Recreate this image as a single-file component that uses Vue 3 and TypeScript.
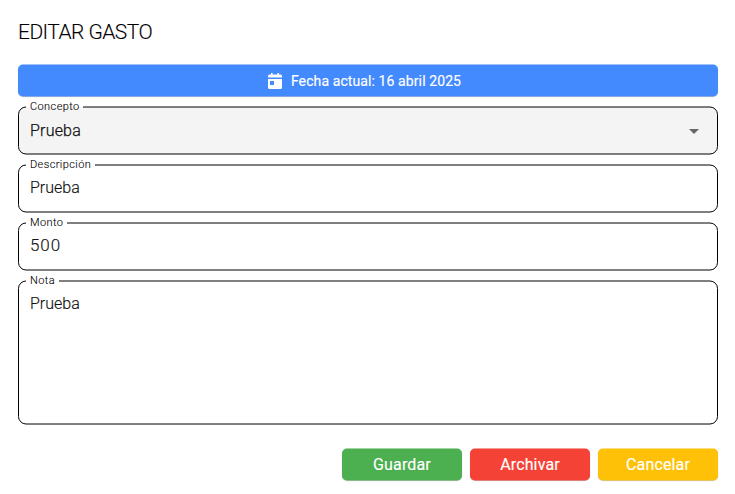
<script setup lang="ts">
import { ref } from 'vue'

interface Field {
  id: string
  label: string
  value: string
  kind: 'select' | 'input' | 'textarea'
  height: number
  gapEnd: number
}

interface Action {
  label: string
  tone: 'save' | 'archive' | 'cancel'
}

const date = ref('16 abril 2025')

const fields = ref<Field[]>([
  { id: 'concepto', label: 'Concepto', value: 'Prueba', kind: 'select', height: 48, gapEnd: 65 },
  { id: 'descripcion', label: 'Descripción', value: 'Prueba', kind: 'input', height: 48, gapEnd: 77 },
  { id: 'monto', label: 'Monto', value: '500', kind: 'input', height: 48, gapEnd: 49 },
  { id: 'nota', label: 'Nota', value: 'Prueba', kind: 'textarea', height: 144, gapEnd: 41 },
])

const actions: Action[] = [
  { label: 'Guardar', tone: 'save' },
  { label: 'Archivar', tone: 'archive' },
  { label: 'Cancelar', tone: 'cancel' },
]

// Rounded outline that leaves an opening in the top edge for the label.
function outlinePath(f: Field): string {
  const bottom = f.height
  return `M${f.gapEnd} 1H692a7.5 7.5 0 0 1 7.5 7.5V${bottom - 7.5}a7.5 7.5 0 0 1 -7.5 7.5H8a7.5 7.5 0 0 1 -7.5 -7.5V8.5A7.5 7.5 0 0 1 8 1`
}
</script>

<template>
  <main class="dialog">
    <h1 class="title">EDITAR GASTO</h1>
    <button class="btn date" type="button">
      <svg class="calendar" width="14" height="16" viewBox="0 0 14 16" aria-hidden="true">
        <path fill="currentColor" fill-rule="evenodd" d="M3 0h1.6v1.6h4.8V0H11v1.6h1.5A1.5 1.5 0 0 1 14 3.1V4.6H0V3.1A1.5 1.5 0 0 1 1.5 1.6H3zM0 6h14v8.5a1.5 1.5 0 0 1-1.5 1.5h-11A1.5 1.5 0 0 1 0 14.500zM2 8v4h4V8z" />
      </svg>
      <span>Fecha actual: {{ date }}</span>
    </button>

    <div class="fields">
      <div v-for="f in fields" :key="f.id" class="field" :class="[f.kind, f.id]">
        <svg class="outline" width="700" :height="f.height + 1" :viewBox="`0 0 700 ${f.height + 1}`" aria-hidden="true">
          <path :d="outlinePath(f)" />
        </svg>
        <span class="label">{{ f.label }}</span>
        <span class="value">{{ f.value }}</span>
        <svg v-if="f.kind === 'select'" class="arrow" width="10" height="5" viewBox="0 0 10 5" aria-hidden="true">
          <path d="M0 0h10L5 5z" fill="#666" />
        </svg>
      </div>
    </div>

    <div class="actions">
      <button v-for="a in actions" :key="a.tone" class="btn" :class="a.tone" type="button">
        <span>{{ a.label }}</span>
      </button>
    </div>
  </main>
</template>

<style>
body {
  background: #fff;
}
</style>

<style scoped>
.dialog {
  box-sizing: border-box;
  width: 735px;
  height: 494px;
  padding: 16px 17px 0 18px;
  font-family: Roboto, "Liberation Sans", sans-serif;
  color: #111;
}
.title {
  margin: 0 0 16px;
  height: 32px;
  line-height: 32px;
  font-size: 21px;
  font-weight: 300;
  letter-spacing: -0.55px;
  color: #000;
  -webkit-text-stroke: 0.1px #000;
}
.btn {
  position: relative;
  display: flex;
  align-items: center;
  justify-content: center;
  width: 120px;
  height: 32px;
  padding: 1px 0 0;
  border: 0;
  background: none;
  color: #fff;
  font: 400 16px/31px Roboto, "Liberation Sans", sans-serif;
  letter-spacing: 0.15px;
  -webkit-text-stroke: 0.15px #fff;
}
.btn::before {
  content: "";
  position: absolute;
  inset: 0;
  border-radius: 5px;
  background: var(--tone);
  box-shadow: 0 0.5px 1px rgba(0, 0, 0, 0.25);
  transform: translateY(0.5px);
}
.btn > * {
  position: relative;
}
.date {
  --tone: #448aff;
  width: 700px;
  gap: 9px;
  padding-right: 7px;
  font-size: 14px;
  letter-spacing: 0.1px;
}
.date span {
  padding-top: 1px;
}
.save { --tone: #4caf50; }
.archive { --tone: #f44336; }
.cancel { --tone: #ffc107; }

.fields {
  display: grid;
  gap: 10px;
  width: 700px;
  margin-top: 10px;
}
.field {
  position: relative;
  display: flex;
  box-sizing: border-box;
  height: 48px;
  padding: 0 19px 0 12px;
  justify-content: space-between;
}
.textarea {
  height: 144px;
}
.outline {
  position: absolute;
  top: 0;
  left: 0;
  fill: none;
  stroke: #000;
  stroke-width: 1;
}
.select .outline {
  fill: #f4f4f4;
}
.label {
  position: absolute;
  top: -6px;
  left: 12px;
  font-size: 11px;
  line-height: 14px;
  letter-spacing: 0.4px;
  white-space: nowrap;
  font-weight: 300;
  color: #000;
  -webkit-text-stroke: 0.1px #000;
}
.value {
  position: relative;
  height: 48px;
  line-height: 48px;
  font-size: 16px;
  font-weight: 300;
  -webkit-text-stroke: 0.15px #111;
}
.monto .value {
  font-size: 17px;
  line-height: 46px;
  letter-spacing: 0.9px;
}
.select .value {
  line-height: 50px;
  letter-spacing: 0.2px;
  -webkit-text-stroke: 0.25px #111;
}
.arrow {
  position: relative;
  margin-top: 23px;
}
.actions {
  display: flex;
  justify-content: flex-end;
  gap: 8px;
  width: 700px;
  margin-top: 24px;
}
</style>
